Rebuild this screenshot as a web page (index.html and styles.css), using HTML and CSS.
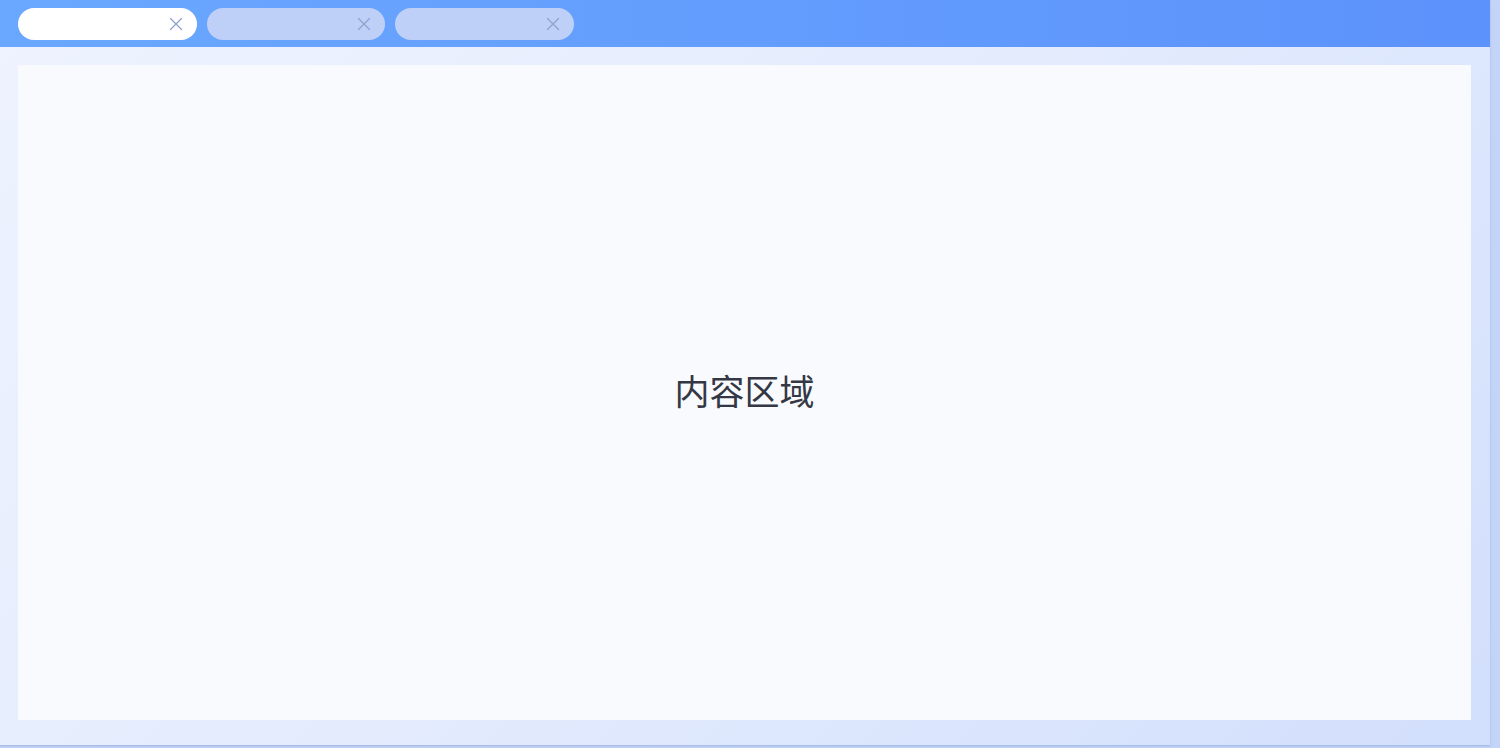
FILE: index.html
```html
<!DOCTYPE html>
<html lang="zh">
<head>
<meta charset="utf-8">
<link rel="stylesheet" href="styles.css">
</head>
<body>
<div class="app">
  <div class="header">
    <div class="tab tab-active">
      <svg class="close" viewBox="0 0 14 14"><path d="M1.5 1.5 L12.5 12.5 M12.5 1.5 L1.5 12.5"/></svg>
    </div>
    <div class="tab">
      <svg class="close" viewBox="0 0 14 14"><path d="M1.5 1.5 L12.5 12.5 M12.5 1.5 L1.5 12.5"/></svg>
    </div>
    <div class="tab">
      <svg class="close" viewBox="0 0 14 14"><path d="M1.5 1.5 L12.5 12.5 M12.5 1.5 L1.5 12.5"/></svg>
    </div>
  </div>
  <div class="main">
    <div class="panel">内容区域</div>
  </div>
</div>
</body>
</html>
```
FILE: styles.css
```css
html, body {
  margin: 0;
  padding: 0;
}
body {
  width: 1500px;
  height: 748px;
  background: #c4d4f8;
  overflow: hidden;
  font-family: "Noto Sans CJK SC", "Noto Sans", sans-serif;
}
.app {
  width: 1490px;
  height: 745px;
  display: flex;
  flex-direction: column;
  background: linear-gradient(135deg, #eef3fe 0%, #e3ebfd 50%, #d2dffc 100%);
  box-shadow: 0 1px 2px rgba(120, 150, 210, 0.5);
}
.header {
  height: 47px;
  box-sizing: border-box;
  padding: 8px 18px 0 18px;
  display: flex;
  gap: 10px;
  background: linear-gradient(90deg, #6aa8ff 0%, #5c92fb 100%);
}
.tab {
  width: 178.5px;
  height: 32px;
  border-radius: 16px;
  background: #bfd0f8;
  display: flex;
  align-items: center;
  justify-content: flex-end;
  padding-right: 14px;
  box-sizing: border-box;
}
.tab-active {
  background: #ffffff;
}
.close {
  width: 14px;
  height: 14px;
  fill: none;
  stroke: #8fa2cf;
  stroke-width: 1.3;
  stroke-linecap: round;
}
.main {
  flex: 1;
  display: flex;
  padding: 18px 19px 25px 18px;
}
.panel {
  flex: 1;
  background: #f8fafd;
  display: flex;
  align-items: center;
  justify-content: center;
  font-size: 35px;
  color: #333844;
  padding-bottom: 6px;
}
```
